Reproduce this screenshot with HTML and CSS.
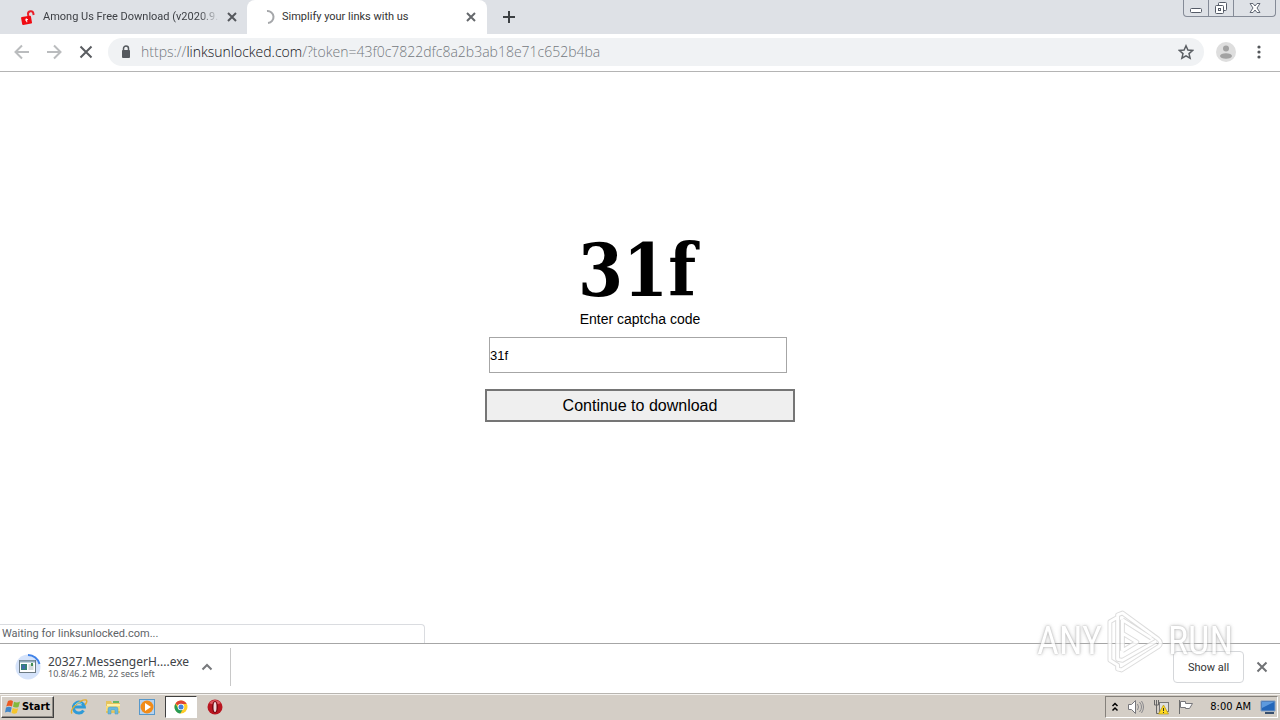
FILE: index.html
```html
<!DOCTYPE html>
<html lang="en">
<head>
<meta charset="utf-8">
<title>Simplify your links with us</title>
<link rel="stylesheet" href="styles.css">
</head>
<body>
<div class="screen">
  <header class="tabstrip">
    <div class="tab">
      <svg class="favicon" width="16" height="16" viewBox="0 0 16 16"><g transform="rotate(-10 8 8)"><path d="M8.500 8V5.500a2.700 2.700 0 0 1 5.400 0V7" fill="none" stroke="#e8202a" stroke-width="2"/><rect x="1" y="7" width="10" height="8" rx="1" fill="#f00a12"/><path d="M6 9v4M4.500 10.500h3" stroke="#fff" stroke-width="1"/></g></svg>
      <span class="tab-title faded">Among Us Free Download (v2020.9.</span>
      <button class="tab-close" aria-label="Close tab"><svg width="10" height="10" viewBox="0 0 10 10"><path d="M1 1l8 8M9 1l-8 8" stroke="#55585d" stroke-width="2"/></svg></button>
    </div>
    <div class="tab active">
      <svg class="favicon" width="16" height="16" viewBox="0 0 16 16"><path d="M7 2a6 6 0 0 1 1 12" fill="none" stroke="#a5a7aa" stroke-width="2"/></svg>
      <span class="tab-title">Simplify your links with us</span>
      <button class="tab-close" aria-label="Close tab"><svg width="10" height="10" viewBox="0 0 10 10"><path d="M1 1l8 8M9 1l-8 8" stroke="#65686c" stroke-width="2"/></svg></button>
    </div>
    <button class="new-tab" aria-label="New tab"><svg width="12" height="12" viewBox="0 0 12 12"><path d="M6 0v12M0 6h12" stroke="#3c4043" stroke-width="2"/></svg></button>
    <div class="window-controls">
      <button aria-label="Minimize"><svg width="14" height="16" viewBox="0 0 14 16"><rect x="1.500" y="8.500" width="11" height="4" rx="1" fill="#fff" stroke="#555b67"/></svg></button>
      <button aria-label="Restore"><svg width="14" height="16" viewBox="0 0 14 16"><g fill="#fff" stroke="#555b67"><rect x="4.500" y="2.500" width="8" height="8" rx="1"/><rect x="1.500" y="5.500" width="8" height="8" rx="1"/><rect x="4.500" y="8.500" width="2" height="2"/></g></svg></button>
      <button class="wide" aria-label="Close window"><svg width="14" height="16" viewBox="0 0 14 16"><path d="M2 3.500h3l2 2.500 2-2.500h3L9 8l3 4.500H9L7 10l-2 2.500H2L5 8z" fill="#fff" stroke="#626875"/></svg></button>
    </div>
  </header>

  <nav class="toolbar">
    <button aria-label="Back"><svg width="16" height="16" viewBox="0 0 16 16"><path d="M15 8H2M8 1.500L1.500 8 8 14.500" fill="none" stroke="#babcbe" stroke-width="2"/></svg></button>
    <button aria-label="Forward"><svg width="16" height="16" viewBox="0 0 16 16"><path d="M1 8h13M8 1.500L14.500 8 8 14.500" fill="none" stroke="#babcbe" stroke-width="2"/></svg></button>
    <button aria-label="Stop"><svg width="16" height="16" viewBox="0 0 16 16"><path d="M2.500 2.500l11 11M13.500 2.500l-11 11" stroke="#5a5d61" stroke-width="2"/></svg></button>
    <div class="address">
      <svg width="12" height="14" viewBox="0 0 12 14"><rect x="2" y="5" width="8" height="8" rx="1" fill="#55595e"/><path d="M3.500 6V3.500a2.500 2.500 0 0 1 5 0V6" fill="none" stroke="#55595e" stroke-width="1.500"/></svg>
      <span class="url">https://<span class="host">linksunlocked.com</span>/?token=43f0c7822dfc8a2b3ab18e71c652b4ba</span>
      <button class="star" aria-label="Bookmark"><svg width="16" height="16" viewBox="0 0 16 16"><path d="M8 1.800l1.900 4.300 4.700.4-3.600 3.100 1.100 4.600L8 11.800l-4.100 2.400L5 9.600 1.400 6.500l4.700-.4z" fill="none" stroke="#5b5f64" stroke-width="1.500"/></svg></button>
    </div>
    <button class="profile" aria-label="Profile"><svg width="20" height="20" viewBox="0 0 20 20"><circle cx="10" cy="10" r="10" fill="#dedede"/><circle cx="10" cy="6.500" r="3" fill="#a2a2a2"/><ellipse cx="10" cy="14" rx="6" ry="2.800" fill="#a2a2a2"/></svg></button>
    <button class="more" aria-label="Menu"><svg width="4" height="14" viewBox="0 0 4 14"><g fill="#53565a"><circle cx="2" cy="2" r="1.600"/><circle cx="2" cy="7" r="1.600"/><circle cx="2" cy="12" r="1.600"/></g></svg></button>
  </nav>

  <main class="page">
    <form class="captcha">
      <div class="captcha-code">31f</div>
      <label for="code">Enter captcha code</label>
      <input id="code" type="text" value="31f">
      <button type="button">Continue to download</button>
    </form>
    <div class="status">Waiting for linksunlocked.com...</div>
  </main>

  <section class="downloads">
    <div class="download">
      <svg width="28" height="28" viewBox="0 0 28 28"><circle cx="14" cy="14" r="12.500" fill="#d5e3fa"/><path d="M14 2a12 12 0 0 1 11.500 9" fill="none" stroke="#3f82e8" stroke-width="2"/><rect x="5.500" y="7.500" width="16" height="12" fill="#fff" stroke="#6d7b83"/><path d="M6 8.500h15" stroke="#8fa9bb" stroke-width="2"/><rect x="7" y="11" width="6" height="6" fill="#358173"/><path d="M8 12h3v4H8z" fill="#426ba8"/><path d="M14.500 12h5M14.500 14h5M14.500 16h5" stroke="#a7b1b5"/><path d="M18 10v3" stroke="#438f52" stroke-width="2"/></svg>
      <div class="file">
        <div class="file-name">20327.MessengerH....exe</div>
        <div class="file-info">10.8/46.2 MB, 22 secs left</div>
      </div>
      <button aria-label="Download options"><svg width="12" height="8" viewBox="0 0 12 8"><path d="M1.500 6.500L6 2l4.500 4.500" fill="none" stroke="#77797c" stroke-width="2"/></svg></button>
    </div>
    <button class="show-all">Show all</button>
    <button class="shelf-close" aria-label="Close downloads"><svg width="12" height="12" viewBox="0 0 12 12"><path d="M1.500 1.500l9 9M10.500 1.500l-9 9" stroke="#707275" stroke-width="2"/></svg></button>
  </section>

  <footer class="taskbar">
    <button class="start"><svg width="16" height="16" viewBox="0 0 16 16"><path d="M3 2q3-1.500 5 .300L7 7.500q-3-1.500-5.800 0z" fill="#ec5a22"/><path d="M9 2.700q3 1.500 6-.3L13.500 8q-3 1.200-5.500-.3z" fill="#83b93c"/><path d="M1 8.500q3-1.500 5.700 0L5.500 13.500q-2.500-1.500-5.500 0z" fill="#4287c9"/><path d="M7.700 9q3 1.500 5.500.2L11.800 14q-2.500 1.500-5.300-.2z" fill="#f5c52c"/></svg>Start</button>
    <div class="launchers">
      <button class="launcher" aria-label="Internet Explorer"><svg width="18" height="18" viewBox="0 0 18 18"><path d="M13.500 12.500a5.500 5.500 0 1 1 .8-3.500H5" fill="none" stroke="#2f9bd7" stroke-width="3"/><path d="M2 15.500C-1 11 11 1 16 2q2 1-1 5" fill="none" stroke="#e2ad32" stroke-width="1.400"/><path d="M5 7q3-4 7-1" fill="none" stroke="#7bd4f3"/></svg></button>
      <button class="launcher" aria-label="Explorer"><svg width="18" height="18" viewBox="0 0 18 18"><path d="M2 3h5l1 2h8v10H2z" fill="#e5c35c"/><path d="M3 6h13v5H3z" fill="#fff1a6"/><path d="M2 8h14v5H2z" fill="#f7dc79"/><path d="M9 3h6v2H9z" fill="#67b765"/><path d="M4 16v-5q0-2 2-2h6q2 0 2 2v5h-3v-4H7v4z" fill="#69b8dc" stroke="#489abc" stroke-width=".5"/></svg></button>
      <button class="launcher" aria-label="Media Player"><svg width="18" height="18" viewBox="0 0 18 18"><rect x="1.500" y="1.500" width="15" height="15" fill="#b6d2ef" stroke="#5798ca"/><circle cx="9" cy="9" r="6.500" fill="#f18b18"/><path d="M7 5l6 4-6 4z" fill="#fff"/></svg></button>
      <button class="launcher current" aria-label="Chrome"><svg width="16" height="16" viewBox="0 0 16 16"><circle cx="8" cy="8" r="6.500" fill="#ffcc28"/><path d="M8 8L2.400 4.700A6.500 6.500 0 0 1 13.700 5H8z" fill="#df4434"/><path d="M8 8L5.400 9.500 2.400 4.700A6.500 6.500 0 0 0 7.300 14.500L10 10z" fill="#269a56"/><circle cx="8" cy="8" r="3.300" fill="#fff"/><circle cx="8" cy="8" r="2.500" fill="#4382dc"/></svg></button>
      <button class="launcher" aria-label="Opera"><svg width="18" height="18" viewBox="0 0 18 18"><circle cx="9" cy="9" r="7.500" fill="#b91520"/><path d="M3 5q6-6 12 0-6 3-12 0" fill="#df5960"/><ellipse cx="9" cy="9" rx="3" ry="6" fill="#780811"/><ellipse cx="9" cy="9" rx="1.500" ry="5" fill="#f0d8d9"/></svg></button>
    </div>
    <div class="tray">
      <svg width="8" height="12" viewBox="0 0 8 12"><path d="M1.500 5L4 2.500 6.500 5M1.500 9.500L4 7l2.500 2.500" fill="none" stroke="#000" stroke-width="1.500"/></svg>
      <svg width="18" height="16" viewBox="0 0 18 16"><path d="M1.500 5.500h3l4-4v13l-4-4h-3z" fill="#fff" stroke="#77777b"/><path d="M10.500 5q2 3 0 6M12.500 3q4 5 0 10M14.500 2q4 6 0 12" fill="none" stroke="#88888c"/></svg>
      <svg width="16" height="16" viewBox="0 0 16 16"><path d="M1.500 1v5h4V1M3.500 1v13.500H9" fill="none" stroke="#666"/><rect x="6.500" y="3.500" width="9" height="9" fill="#dedede" stroke="#777"/><path d="M10.500 6l5 9h-10z" fill="#ffda20" stroke="#b59714" stroke-width=".7"/><path d="M10.500 9v3M10.500 13v1" stroke="#333"/></svg>
      <svg width="17" height="16" viewBox="0 0 17 16"><path d="M2.500 15V1" stroke="#6e6e6e"/><path d="M3.500 2.500h5v2h7l-3 5H8.500v-1h-5z" fill="#fff" stroke="#77777b"/></svg>
      <time>8:00 AM</time>
      <svg width="16" height="14" viewBox="0 0 16 14"><path d="M1 1h14v10H1z" fill="#2467ba" stroke="#7f9bc0"/><path d="M2 2h12L2 8z" fill="#5d9ade"/><path d="M5 13h9" stroke="#374f6e" stroke-width="2"/></svg>
    </div>
  </footer>

  <div class="watermark" aria-hidden="true">
    <span>ANY</span>
    <svg width="56" height="64" viewBox="0 0 58 64"><g fill="none" stroke-linejoin="round"><path id="mark" d="M10 8L3 12v40l8 5v4l4 1 38-24q5-4 0-8L16 3l-5 2v46l5 1 35-20M16 10v32M16 10l30 19M16 24l15 9-15 9" stroke="#d4d4d4" stroke-width="5"/><path d="M10 8L3 12v40l8 5v4l4 1 38-24q5-4 0-8L16 3l-5 2v46l5 1 35-20M16 10v32M16 10l30 19M16 24l15 9-15 9" stroke="#fff" stroke-width="3"/></g></svg>
    <span>RUN</span>
  </div>
</div>
</body>
</html>
```
FILE: styles.css
```css
* { box-sizing: border-box; }
body { margin: 0; background: #fff; color: #000; font-family: "DejaVu Sans Condensed", "Noto Sans", sans-serif; font-size: 11px; }
button { margin: 0; padding: 0; border: 0; background: none; color: inherit; font: inherit; display: flex; align-items: center; justify-content: center; }
svg { display: block; flex: none; }
.screen { position: relative; min-height: 100vh; display: flex; flex-direction: column; overflow: hidden; }
.tabstrip { display: flex; height: 34px; background: #dee1e6; }
.tab { display: flex; align-items: center; width: 247px; padding: 0 10px 0 20px; gap: 7px; color: #3e4146; border-radius: 0 0 8px 0; }
.tab.active { width: 240px; padding: 0 11px 0 13px; gap: 6px; background: #fff; border-radius: 8px 8px 0 0; color: #333; }
.tab-title { flex: 1; min-width: 0; overflow: hidden; white-space: nowrap; font: 11px/16px Roboto, sans-serif; }
.faded { mask-image: linear-gradient(to right, #000 88%, transparent); }
.new-tab { width: 44px; }
.window-controls { display: flex; align-self: flex-start; height: 17px; margin: 0 4px 0 auto; border: 1px solid #858b97; border-top: 0; border-radius: 0 0 4px 4px; }
.window-controls button { width: 25px; border-right: 1px solid #858b97; }
.window-controls .wide { width: 41px; border: 0; }
.toolbar { display: flex; align-items: center; height: 38px; padding: 0 15px 1px 14px; gap: 16px; border-bottom: 1px solid #b4b4b4; }
.address { flex: 1; display: flex; align-items: center; height: 28px; margin: 0 -4px 0 -2px; padding: 0 10px 0 12px; gap: 9px; border-radius: 14px; background: #f0f2f4; }
.url { flex: 1; color: #73787d; font: 300 14px/18px "Open Sans", sans-serif; }
.host { color: #101114; }
.more { width: 13px; }
.page { flex: 1; display: flex; flex-direction: column; justify-content: space-between; align-items: center; }
.captcha { display: flex; flex-direction: column; align-items: center; width: 310px; padding-top: 160px; font-family: "Liberation Sans", Arial, sans-serif; }
.captcha-code { height: 78px; padding-right: 6px; font: bold 72px/78px "DejaVu Serif Condensed", "DejaVu Serif", serif; }
.captcha label { line-height: 18px; font-size: 14px; }
.captcha input { align-self: flex-start; width: 298px; height: 36px; margin: 9px 0 16px 4px; padding: 0; border: 1px solid #a6a6a6; border-radius: 0; font: 13px "Liberation Sans", Arial, sans-serif; }
.captcha button { width: 100%; height: 33px; border: 2px solid #757575; background: #efefef; font-size: 16px; }
.status { align-self: flex-start; width: 425px; padding: 0 2px; line-height: 18px; border: 1px solid #dadce0; border-width: 1px 1px 0 0; border-radius: 0 4px 0 0; color: #606367; font-family: Roboto, sans-serif; }
.downloads { display: flex; align-items: center; height: 50px; padding: 0 12px 3px 0; gap: 12px; border-top: 1px solid #a6a6a6; }
.download { display: flex; align-items: center; width: 231px; height: 38px; padding-left: 14px; gap: 6px; border-right: 1px solid #c8c8c8; margin-right: auto; }
.file { width: 140px; white-space: nowrap; }
.download button { margin-left: 7px; }
.file-name { color: #404347; font: 12px/14px "Noto Sans", sans-serif; }
.file-info { color: #606367; font: 9px/10px "Noto Sans", sans-serif; }
.show-all { width: 71px; height: 32px; border: 1px solid #d5d7da; border-radius: 4px; color: #333; font-family: Roboto, sans-serif; }
.taskbar { display: flex; align-items: center; height: 27px; padding: 1px 2px 2px 1px; border-top: 1px solid #b8b5b0; background: #d4cec6; box-shadow: inset 0 1px #f5f3f0; }
.start { width: 53px; height: 22px; gap: 1px; border: 1px solid; border-color: #fff #404040 #404040 #fff; box-shadow: inset -1px -1px #8f8b85; font: bold 11px "DejaVu Sans Condensed", sans-serif; }
.launchers { display: flex; margin-left: 9px; gap: 2px; }
.launcher { width: 32px; height: 22px; }
.current { border: 1px solid; border-color: #404040 #fff #fff #404040; background: #fff; }
.tray { display: flex; align-items: center; height: 22px; margin-left: auto; padding: 0 1px 0 5px; gap: 8px; border: 1px solid; border-color: #85817b #fff #fff #85817b; }
.tray time { margin: 0 1px 0 8px; }
.watermark { position: absolute; right: 47px; bottom: 47px; display: flex; align-items: center; gap: 5px; color: #fff; font: 38px/64px "Liberation Sans Narrow", "Roboto Condensed", "Open Sans Condensed", "Liberation Sans", sans-serif; text-shadow: 0 0 2px #999, 0 0 4px #bbb; opacity: 0.8; pointer-events: none; }
```
